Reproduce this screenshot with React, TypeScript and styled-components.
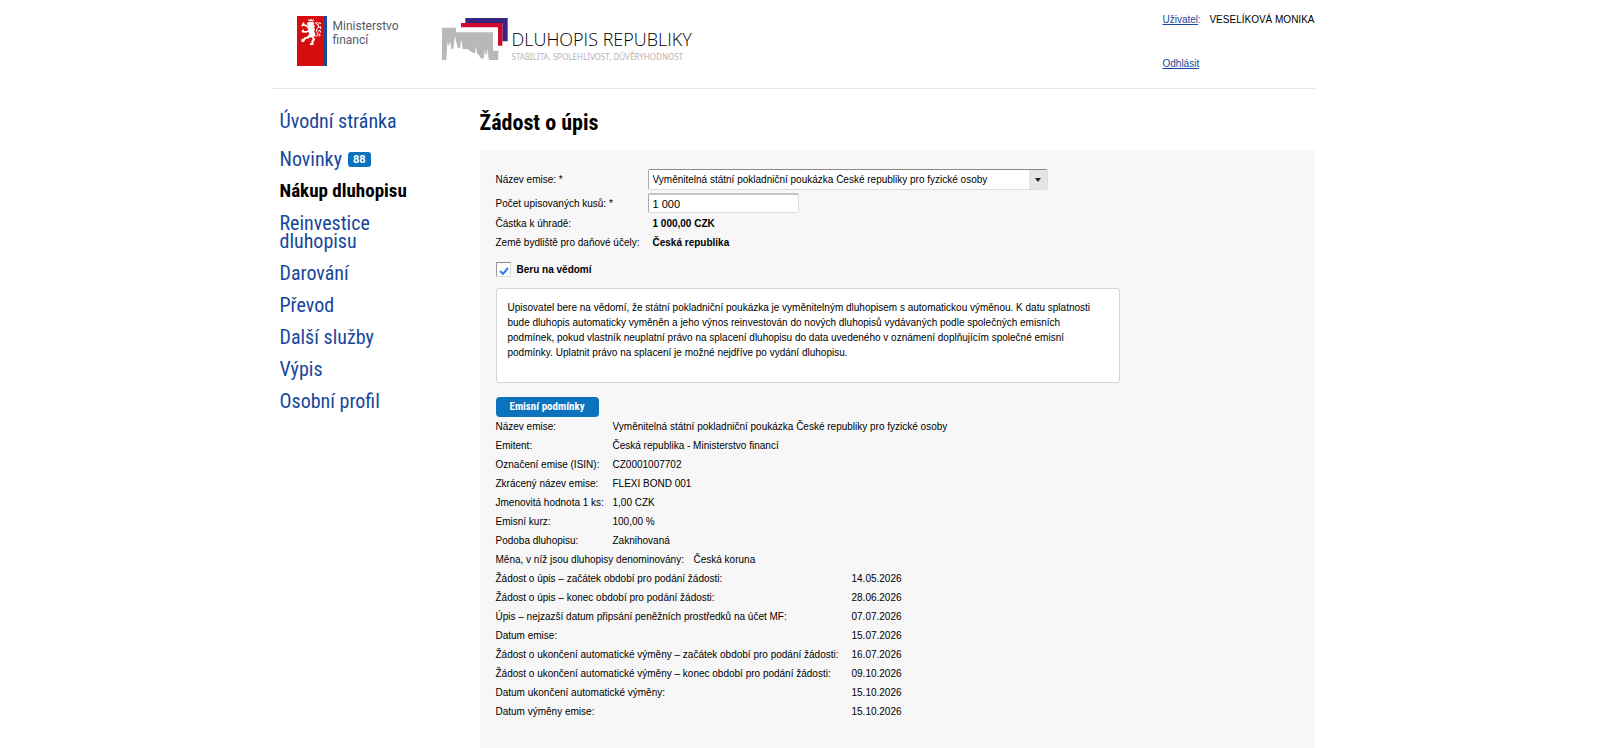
import React from 'react';
import styled, { createGlobalStyle, css } from 'styled-components';

const GlobalStyle = createGlobalStyle`
  * { box-sizing: border-box; }
  body {
    margin: 0;
    padding-right: 15px;
    background: #fff;
    color: #000;
    font: 10px/19px "Liberation Sans", Arial, sans-serif;
  }
`;

const condensed = css`
  font-family: "Roboto Condensed", "Open Sans Condensed", sans-serif;
`;

const Page = styled.div`
  max-width: 1044px;
  margin: 0 auto;
`;

const Header = styled.header`
  display: flex;
  justify-content: space-between;
  height: 89px;
  padding-left: 26px;
  border-bottom: 1px solid #e6e6e6;
`;

const Brands = styled.div`
  display: flex;
  align-items: flex-start;
  gap: 41px;
  padding-top: 16px;
`;

const Ministry = styled.a`
  display: flex;
  gap: 6px;
  color: #555b69;
  font: 12px/14px Roboto, sans-serif;
  text-decoration: none;
`;

const MinistryName = styled.span`
  width: 68px;
  padding-top: 3px;
`;

const BondBrand = styled.a`
  display: flex;
  gap: 4px;
  padding-top: 2px;
  text-decoration: none;
`;

const BondText = styled.span`
  display: flex;
  flex-direction: column;
  padding-top: 9px;
  white-space: nowrap;
`;

const BondName = styled.span`
  color: #000;
  font: 300 18px/24px "Open Sans", sans-serif;
`;

const BondMotto = styled.span`
  color: #b4b4b4;
  font: 8px/12px "Noto Sans", sans-serif;
`;

const UserPanel = styled.div`
  display: flex;
  flex-direction: column;
  align-items: flex-start;
  gap: 25px;
  width: 152px;
  padding-top: 10px;
  white-space: nowrap;
`;

const UserLine = styled.div`
  display: flex;
  justify-content: space-between;
  width: 100%;
  color: #0b72bd;
`;

const UserName = styled.span`
  color: #000;
`;

const Link = styled.a`
  color: #17479b;
  text-underline-offset: 1px;
`;

const Body = styled.div`
  display: grid;
  grid-template-columns: 209px minmax(0, 1fr);
`;

const Nav = styled.nav`
  padding: 23px 60px 0 9px;
`;

const NavList = styled.ul`
  display: flex;
  flex-direction: column;
  gap: 14px;
  margin: 0;
  padding: 0;
  list-style: none;
`;

const NavItem = styled.li<{ $lead?: boolean }>`
  margin-bottom: ${(p) => (p.$lead ? 6 : 0)}px;
`;

const NavLink = styled.a<{ $active?: boolean }>`
  ${condensed}
  display: flex;
  align-items: center;
  gap: 6px;
  color: ${(p) => (p.$active ? '#000' : '#17479b')};
  font-size: ${(p) => (p.$active ? 19 : 20)}px;
  font-weight: ${(p) => (p.$active ? 700 : 400)};
  line-height: 18px;
  text-decoration: none;
`;

const Badge = styled.span`
  padding: 0 5px;
  border-radius: 3px;
  background: #0b72bd;
  color: #fff;
  font: 700 11px/15px Roboto, sans-serif;
`;

const Main = styled.main`
  padding-top: 21px;
`;

const Title = styled.h1`
  ${condensed}
  margin: 0 0 14px;
  color: #000;
  font-size: 22px;
  font-weight: 700;
  line-height: 26px;
`;

const Panel = styled.form`
  padding: 19px 16px 27px;
  background: #f7f7f7;
`;

const Field = styled.div<{ $gap?: number }>`
  display: grid;
  grid-template-columns: 152px minmax(0, 1fr);
  align-items: center;
  margin-bottom: ${(p) => p.$gap ?? 0}px;
`;

const control = css`
  width: 100%;
  margin: 0;
  border: 1px solid #ddd;
  border-top: 1px solid #888;
  border-left-color: #aaa;
  border-radius: 2px;
  background: #fff;
  color: #000;
  font-family: inherit;
`;

const SelectBox = styled.div`
  position: relative;
  display: flex;
  max-width: 400px;
`;

const Select = styled.select`
  ${control}
  height: 21px;
  padding: 0 24px 0 4px;
  appearance: none;
  background: linear-gradient(#e5e5e5, #e5e5e5) right / 18px 100% no-repeat #fff;
  font-size: 10px;
`;

const Arrow = styled.svg`
  position: absolute;
  top: 9px;
  right: 7px;
  pointer-events: none;
`;

const NumberInput = styled.input`
  ${control}
  max-width: 151px;
  height: 20px;
  padding: 0 4px;
  border-top: 2px solid #c4c4c4;
  font-size: 11px;
`;

const Output = styled.output`
  padding-left: 5px;
  font-weight: 700;
`;

const ConsentRow = styled.div`
  display: flex;
  align-items: center;
  gap: 6px;
  margin: 10px 0 11px;
  line-height: 15px;
`;

const CheckHolder = styled.span`
  position: relative;
  display: flex;
`;

const Checkbox = styled.input`
  width: 15px;
  height: 15px;
  margin: 0;
  border: 1px solid #ddd;
  border-top-color: #888;
  border-left-color: #999;
  border-radius: 1px;
  background: #fff;
  appearance: none;

  &:not(:checked) + svg { display: none; }
`;

const CheckMark = styled.svg`
  position: absolute;
  inset: 5px auto auto 3px;
  pointer-events: none;
`;

const ConsentLabel = styled.label`
  font-weight: 700;
`;

const Notice = styled.p`
  max-width: 624px;
  margin: 0 0 14px;
  padding: 11px 11px 22px;
  border: 1px solid #d4d4d4;
  border-radius: 3px;
  background: #fff;
  line-height: 15px;
`;

const TermsButton = styled.button`
  ${condensed}
  display: block;
  height: 20px;
  padding: 0 14px;
  border: 0;
  border-radius: 4px;
  background: #0b72bd;
  color: #fff;
  font-size: 11px;
  font-weight: 700;
  line-height: 20px;
`;

const Details = styled.table`
  border-collapse: collapse;

  th, td {
    padding: 0;
    font-weight: 400;
    text-align: left;
    white-space: nowrap;
  }
`;

const DetailLabel = styled.th<{ $width: number }>`
  width: ${(p) => p.$width}px;
  min-width: ${(p) => p.$width}px;
`;

const nav = [
  { text: 'Úvodní stránka', lead: true },
  { text: 'Novinky', badge: '88' },
  { text: 'Nákup dluhopisu', active: true },
  { text: 'Reinvestice dluhopisu' },
  { text: 'Darování' },
  { text: 'Převod' },
  { text: 'Další služby' },
  { text: 'Výpis' },
  { text: 'Osobní profil' },
];

const issue = 'Vyměnitelná státní pokladniční poukázka České republiky pro fyzické osoby';

const bond = [
  ['Název emise:', issue],
  ['Emitent:', 'Česká republika - Ministerstvo financí'],
  ['Označení emise (ISIN):', 'CZ0001007702'],
  ['Zkrácený název emise:', 'FLEXI BOND 001'],
  ['Jmenovitá hodnota 1 ks:', '1,00 CZK'],
  ['Emisní kurz:', '100,00 %'],
  ['Podoba dluhopisu:', 'Zaknihovaná'],
];

const currency = [['Měna, v níž jsou dluhopisy denominovány:', 'Česká koruna']];

const dates = [
  ['Žádost o úpis – začátek období pro podání žádosti:', '14.05.2026'],
  ['Žádost o úpis – konec období pro podání žádosti:', '28.06.2026'],
  ['Úpis – nejzazší datum připsání peněžních prostředků na účet MF:', '07.07.2026'],
  ['Datum emise:', '15.07.2026'],
  ['Žádost o ukončení automatické výměny – začátek období pro podání žádosti:', '16.07.2026'],
  ['Žádost o ukončení automatické výměny – konec období pro podání žádosti:', '09.10.2026'],
  ['Datum ukončení automatické výměny:', '15.10.2026'],
  ['Datum výměny emise:', '15.10.2026'],
];

function DetailTable({ rows, labelWidth }: { rows: string[][]; labelWidth: number }) {
  return (
    <Details>
      <tbody>
        {rows.map(([label, value]) => (
          <tr key={label}>
            <DetailLabel scope="row" $width={labelWidth}>{label}</DetailLabel>
            <td>{value}</td>
          </tr>
        ))}
      </tbody>
    </Details>
  );
}

const LionFlag = () => (
  <svg width="30" height="50" viewBox="0 0 90 150" aria-hidden="true">
    <path fill="#d70c0f" d="M0 0h81v150H0z" />
    <path fill="#1b4b96" d="M81 0h9v150h-9z" />
    {/* crown */}
    <path fill="#fff" d="M33 9l5 3 4-4 4 4 5-3-2 6H35z" />
    {/* head, mane and body */}
    <path fill="#fff" d="M34 17h14l4 5-2 4 4 4-3 5 3 5-3 7 4 5-1 7-7 6-9-1-6 3-2-5 6-6-1-7 1-6-5-4 4-5-4-3 3-4-5-2 1-4 4-1z" />
    {/* forelegs */}
    <path fill="none" stroke="#fff" strokeWidth="5" d="M36 36l-8-7-12-4M20 19l-2 8-4 3M37 44l-10 4-13-2M19 41l-1 9" />
    {/* hind legs */}
    <path fill="none" stroke="#fff" strokeWidth="6" d="M37 63l-13 4-5 8-6-2M17 68l1 9M47 64l4 7-5 6 1 7-8 1" />
    {/* tail */}
    <path fill="none" stroke="#fff" strokeWidth="3" d="M52 58c6 4 11 2 11-4s-7-6-5-12 8-6 7-12-9-4-8-10M55 20l5 2 3-4M62 26l7-6 2 4M64 35l7-3v7M62 45l8-1v6M65 54l5 3-5 4" />
  </svg>
);

const CastleMark = () => (
  <svg width="66" height="42" viewBox="0 0 198 126" aria-hidden="true">
    <path fill="#392581" d="M70 0h127v70h-16V15H70z" />
    <path fill="#cf0a2c" d="M57 15h124v68h-13V28H57z" />
    <path
      fill="#b8b8b8"
      d="M0 29h42v14h111v55h16v28H141l-2-10-2-23-3 17h-3l-2-17-3 25-4 5-7-3-5-10-3-2h-2l-3-24-3 22-7-2-12-7-4-4H62l-2-13-2-16-2 14-2 13-7-2-3-13-2-6-3-17-3 21-2 19-5 1-2-10-3-14-3 14-2-4-2-10-2 20-2 36H0z"
    />
  </svg>
);

export default function App() {
  return (
    <>
      <GlobalStyle />
      <Page>
        <Header>
          <Brands>
            <Ministry href="#mf">
              <LionFlag />
              <MinistryName>Ministerstvo financí</MinistryName>
            </Ministry>
            <BondBrand href="#home">
              <CastleMark />
              <BondText>
                <BondName>DLUHOPIS REPUBLIKY</BondName>
                <BondMotto>STABILITA, SPOLEHLIVOST, DŮVĚRYHODNOST</BondMotto>
              </BondText>
            </BondBrand>
          </Brands>
          <UserPanel>
            <UserLine>
              <span><Link href="#user">Uživatel</Link>:</span>
              <UserName>VESELÍKOVÁ MONIKA</UserName>
            </UserLine>
            <Link href="#logout">Odhlásit</Link>
          </UserPanel>
        </Header>
        <Body>
          <Nav>
            <NavList>
              {nav.map((item) => (
                <NavItem key={item.text} $lead={item.lead}>
                  <NavLink href="#" $active={item.active} aria-current={item.active ? 'page' : undefined}>
                    {item.text}
                    {item.badge && <Badge>{item.badge}</Badge>}
                  </NavLink>
                </NavItem>
              ))}
            </NavList>
          </Nav>
          <Main>
            <Title>Žádost o úpis</Title>
            <Panel>
              <Field $gap={3}>
                <label htmlFor="issue">Název emise: *</label>
                <SelectBox>
                  <Select id="issue">
                    <option>{issue}</option>
                  </Select>
                  <Arrow width="6" height="4" viewBox="0 0 6 4" aria-hidden="true">
                    <path fill="#222" d="M0 0h6L3 4z" />
                  </Arrow>
                </SelectBox>
              </Field>
              <Field $gap={1}>
                <label htmlFor="count">Počet upisovaných kusů: *</label>
                <NumberInput id="count" type="text" inputMode="numeric" defaultValue="1 000" />
              </Field>
              <Field>
                <label htmlFor="amount">Částka k úhradě:</label>
                <Output id="amount">1 000,00 CZK</Output>
              </Field>
              <Field>
                <label htmlFor="country">Země bydliště pro daňové účely:</label>
                <Output id="country">Česká republika</Output>
              </Field>
              <ConsentRow>
                <CheckHolder>
                  <Checkbox id="consent" type="checkbox" defaultChecked />
                  <CheckMark width="10" height="8" viewBox="0 0 10 8" aria-hidden="true">
                    <path fill="none" stroke="#2f7df6" strokeWidth="2" d="M1 4l3 3 5-6" />
                  </CheckMark>
                </CheckHolder>
                <ConsentLabel htmlFor="consent">Beru na vědomí</ConsentLabel>
              </ConsentRow>
              <Notice>
                Upisovatel bere na vědomí, že státní pokladniční poukázka je vyměnitelným dluhopisem s
                automatickou výměnou. K datu splatnosti bude dluhopis automaticky vyměněn a jeho výnos
                reinvestován do nových dluhopisů vydávaných podle společných emisních podmínek, pokud
                vlastník neuplatní právo na splacení dluhopisu do data uvedeného v oznámení doplňujícím
                společné emisní podmínky. Uplatnit právo na splacení je možné nejdříve po vydání dluhopisu.
              </Notice>
              <TermsButton type="button">Emisní podmínky</TermsButton>
              <DetailTable rows={bond} labelWidth={117} />
              <DetailTable rows={currency} labelWidth={198} />
              <DetailTable rows={dates} labelWidth={356} />
            </Panel>
          </Main>
        </Body>
      </Page>
    </>
  );
}
